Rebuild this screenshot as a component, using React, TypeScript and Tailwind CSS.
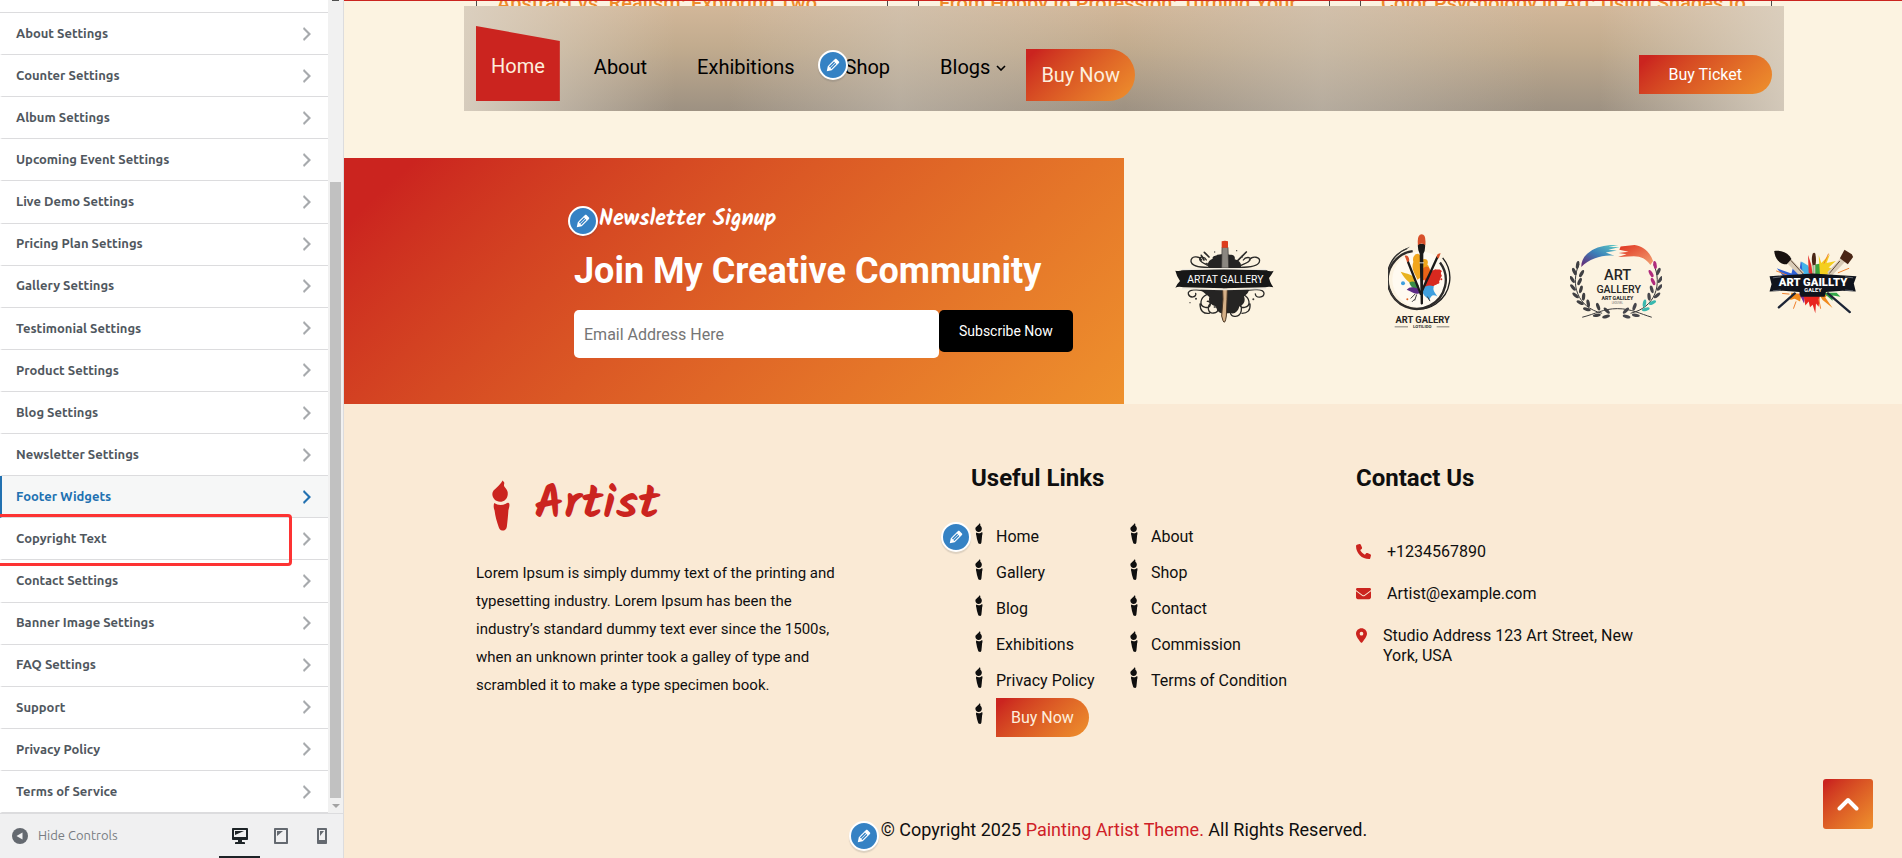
'use client'

import type { ReactNode } from 'react'
import { FaEnvelope, FaLocationDot, FaPhone } from 'react-icons/fa6'

const sections = [
  'About Settings',
  'Counter Settings',
  'Album Settings',
  'Upcoming Event Settings',
  'Live Demo Settings',
  'Pricing Plan Settings',
  'Gallery Settings',
  'Testimonial Settings',
  'Product Settings',
  'Blog Settings',
  'Newsletter Settings',
  'Footer Widgets',
  'Copyright Text',
  'Contact Settings',
  'Banner Image Settings',
  'FAQ Settings',
  'Support',
  'Privacy Policy',
  'Terms of Service'
]

const posts = [
  'Abstract vs. Realism: Exploring Two',
  'From Hobby to Profession: Turning Your',
  'Color Psychology in Art: Using Shades to'
]

const linksLeft = ['Home', 'Gallery', 'Blog', 'Exhibitions', 'Privacy Policy']
const linksRight = ['About', 'Shop', 'Contact', 'Commission', 'Terms of Condition']

const devices = [
  {
    name: 'Desktop',
    active: true,
    path: 'M3 2h14c.55 0 1 .45 1 1v10c0 .55-.45 1-1 1h-5v2h2c.55 0 1 .45 1 1v1H5v-1c0-.55.45-1 1-1h2v-2H3c-.55 0-1-.45-1-1V3c0-.55.45-1 1-1zm13 9V4H4v7h12zM5 5h9L5 9V5z'
  },
  {
    name: 'Tablet',
    active: false,
    path: 'M4 2h12c.55 0 1 .45 1 1v14c0 .55-.45 1-1 1H4c-.55 0-1-.45-1-1V3c0-.55.45-1 1-1zm11 14V4H5v12h10zM6 5h6l-6 5V5z'
  },
  {
    name: 'Mobile',
    active: false,
    path: 'M6 2h8c.55 0 1 .45 1 1v14c0 .55-.45 1-1 1H6c-.55 0-1-.45-1-1V3c0-.55.45-1 1-1zm7 12V4H7v10h6zM8 5h4l-4 5V5z'
  }
]

// ---------- Iconos ----------

function Brush({ className }: { className: string }) {
  return (
    <svg viewBox="95 57 56 157" className={className} fill="currentColor" aria-hidden="true">
      <path d="M128 58c2 4 7 5 5 10-2 6 0 9 4 13 5 6 8 12 7 20-1 13-11 23-24 23s-24-11-24-24c0-10 6-13 13-20 8-7 14-13 19-22z" />
      <path d="M102 128c10 7 24 8 36 2 4-3 9-5 11 0 1 8-1 14-3 20-1 18-3 36-5 52-2 9-9 12-14 11-6 0-9-4-11-10-6-17-11-34-13-52-3-8-4-15-1-23z" />
    </svg>
  )
}

function EditButton({ label, className }: { label: string; className: string }) {
  return (
    <button
      aria-label={label}
      className={`absolute z-10 flex size-[30px] items-center justify-center rounded-full border-2 border-white bg-[#3582c4] text-white shadow-[0_2px_1px_rgba(60,67,74,0.15)] ${className}`}
    >
      <svg viewBox="0 0 20 20" className="size-[18px]" fill="currentColor">
        <path d="M13.89 3.39l2.71 2.72c.46.46.42 1.24.03 1.64l-8.01 8.02-5.56 1.16 1.16-5.58s7.6-7.63 7.99-8.03c.39-.39 1.22-.39 1.68.07zm-2.73 2.79l-5.59 5.61 1.11 1.11 5.54-5.65zm-2.97 8.23l5.58-5.6-1.07-1.08-5.59 5.6z" />
      </svg>
    </button>
  )
}

// ---------- Logos de patrocinadores ----------

function LogoArtat() {
  return (
    <svg viewBox="105 55 297 255" className="h-[85px] w-[99px]" role="img" aria-label="Artat Gallery">
      <g fill="none" stroke="#2b2a28" strokeWidth="4" strokeLinecap="round">
        <path d="M205 140c-18 0-50-2-52-18s24-18 32-4M215 140c-14-8-34-14-36-24s16-8 20 2M300 140c18 0 52 0 58-16s-22-20-30-6M292 140c14-10 34-12 38-22s-14-10-20 0" />
        <path d="M195 212c-20-8-54-6-50 8s26 10 22-2M312 212c24-8 60-8 60 6s-24 16-26 2M200 222c-20 10-24 34-4 38s18-20 6-18M310 222c20 10 24 34 4 38s-18-20-6-18M215 245c-16 12-12 34 6 32s16-22 2-18M295 245c16 14 10 40-8 42s-22-22-6-24M180 250c0 20 10 30 28 28M330 250c2 20-8 28-24 28" />
        <path d="M193 95l14 14M319 94l-32 32M184 104l8 14" strokeWidth="5" />
      </g>
      <path fill="#252423" d="M206 142c-6-14 0-24 12-28-2-10 10-8 14-12 20-4 30-2 38 0 14 0 16 8 14 14 16 4 22 14 18 26z" />
      <path fill="#252423" d="M180 205h146c2 12-8 16-14 22 6 16-2 26-14 30-4 18-16 24-26 20l-24 2c-12-2-18-10-20-22-16-4-24-14-20-28-10-8-18-14-28-24z" />
      <g fill="#3c3a38">
        <circle cx="200" cy="130" r="4" /><circle cx="306" cy="108" r="3" /><circle cx="290" cy="90" r="2" />
        <circle cx="224" cy="94" r="2" /><circle cx="168" cy="234" r="3" /><circle cx="340" cy="236" r="3" />
        <circle cx="150" cy="246" r="2" /><circle cx="334" cy="112" r="2" />
      </g>
      <path fill="#8b8780" stroke="#3b3835" strokeWidth="2" d="M246 80h18l2 62h-21z" />
      <path fill="#dd3b1c" d="M245 62q10-4 19 0v19h-19z" />
      <path fill="#d5b087" stroke="#4b3725" strokeWidth="3" d="M248 206h14l-1 30 -2 50q-4 28-10 14l-4-14 4-50z" />
      <path fill="#171717" d="M106 150q12 3 22-2l124-3 126 3q12 6 23 2-6 12-14 22 4 16 13 28-14-4-24 0l-124 3-122-3q-14-4-24 1 4-10 14-20-10-14-14-31z" />
      <path d="M126 147l126-3 126 3M126 204l126 3 126-3" stroke="#eee9df" strokeWidth="4" fill="none" />
      <text x="256" y="186" textAnchor="middle" fontFamily="Roboto, sans-serif" fontSize="31" fill="#fff">ARTAT GALLERY</text>
    </svg>
  )
}

function LogoGalery() {
  return (
    <svg viewBox="748 42 195 290" className="h-[97px] w-[65px]" role="img" aria-label="Art Galery">
      <circle cx="845" cy="181" r="84" fill="#fffaf0" />
      <path d="M806 88a94 94 0 1 0 106 28" fill="none" stroke="#1c1c1c" strokeWidth="4" />
      <path d="M822 96a87 87 0 1 0 82 34" fill="none" stroke="#2d2b2a" strokeWidth="7" />
      <path d="M812 84a98 98 0 0 0-30 168" fill="none" stroke="#4c4a47" strokeWidth="2" />
      <path fill="#f2a61c" d="M824 128c-4-14 4-24 14-24 10 4 6 14 12 18 10-6 22 0 16 14 10 10 6 20 0 26l-30 20c-6-20-20-30-12-54z" />
      <path fill="#e9b320" d="M786 158c20 8 36 6 44 24l-6 18c-10-10-22-14-38-42z" />
      <path fill="#d8291f" d="M858 176c10-20 20-20 32-26 8 2 14-2 20 6-6 4-2 10 0 14-8 10-8 28-22 28-8 8-22 6-30 4z" />
      <path fill="#ea6417" d="M850 152c14-20 26-6 24 8l-16 22-12 4z" />
      <path fill="#3a8d45" d="M812 190c10-6 20-2 28 8l-4 12c-10 0-20-6-24-20z" />
      <path fill="#5b2a86" d="M804 212c10-12 20-8 34-4l4 14c-14 6-22-4-38-10z" />
      <path fill="#3fa0df" d="M850 212c12-16 24-14 36-10-6 10 4 20 10 30-14-8-20-2-24 12-6-10-18-10-22-32z" />
      <circle cx="793" cy="192" r="6" fill="#3fa0df" /><circle cx="898" cy="190" r="4" fill="#d8291f" />
      <circle cx="806" cy="240" r="3" fill="#e06020" /><circle cx="908" cy="180" r="3" fill="#d8291f" />
      <path d="M808 128l38 96M896 114l-50 110" stroke="#1b1a19" strokeWidth="7" strokeLinecap="round" />
      <path fill="#1b1a19" d="M838 74h21q2 18-5 30l-1 150q-4 5-7 0l-3-150q-7-14-5-30z" />
      <path fill="#d8502a" d="M838 78q-4-32 11-33 14 0 11 33-11-10-22 0zM798 110q12-4 14 14l-6 6zM906 102q-12 0-12 12l6 4z" />
      <path d="M842 131h14" stroke="#ddd" strokeWidth="3" />
      <path d="M816 238l14-14M820 248l8-8M866 232l8 14M834 226l-6 18" stroke="#3a3a3a" strokeWidth="3" />
      <text x="852" y="312" textAnchor="middle" fontFamily="Roboto, sans-serif" fontWeight="700" fontSize="28" fill="#262423">ART GALERY</text>
      <path d="M768 323h40M894 323h38" stroke="#444" strokeWidth="2" />
      <text x="851" y="328" textAnchor="middle" fontFamily="Roboto, sans-serif" fontWeight="700" fontSize="13" fill="#333">LOTILIDO</text>
    </svg>
  )
}

// hojas de la corona: x, y, giro
const leaves = [
  [176, 132, 10], [166, 152, -25], [188, 158, 30], [160, 176, -30], [182, 182, 25], [162, 200, -40],
  [186, 206, 15], [170, 224, -50], [194, 228, 5], [184, 246, -65], [208, 248, -10], [204, 266, -75],
  [238, 258, -20], [234, 284, 80], [264, 270, -45], [262, 288, 75]
]

function LogoWreath() {
  return (
    <svg viewBox="153 66 278 232" className="h-[77px] w-[92px]" role="img" aria-label="Art Gallery">
      <defs>
        <linearGradient id="azul" x1="0" y1="1" x2="1" y2="0">
          <stop offset="0" stopColor="#6a2370" />
          <stop offset="0.5" stopColor="#3b7fb8" />
          <stop offset="1" stopColor="#5fd0c6" />
        </linearGradient>
        <linearGradient id="naranja" x1="0" y1="0" x2="1" y2="1">
          <stop offset="0" stopColor="#e0321f" />
          <stop offset="1" stopColor="#f2a172" />
        </linearGradient>
      </defs>
      <path fill="url(#azul)" d="M187 138c0-18 8-34 26-46 22-16 50-22 86-20l-30 6 34 0-34 8 26 2-34 6 26 10c-36-4-74 8-100 34z" />
      <path fill="url(#naranja)" d="M306 76l42-4c26 4 46 20 56 48l-8 12c-14-18-28-26-50-26l-48 2 26-8-24-4 30-4-28-6z" />
      <path d="M180 130c-26 60-6 130 70 148M406 130c26 60 6 130-70 148M190 290c40-10 64-26 106-26s70 16 104 26" fill="none" stroke="#3a3a3c" strokeWidth="3" />
      {leaves.map(([x, y, a]) => (
        <ellipse key={`l${x}-${y}`} cx={x} cy={y} rx="5" ry="12" fill="#3f3f42" transform={`rotate(${a} ${x} ${y})`} />
      ))}
      {leaves.map(([x, y, a]) => (
        <ellipse
          key={`r${x}-${y}`}
          cx={586 - x}
          cy={y}
          rx="5"
          ry="12"
          fill={y < 190 && x > 170 ? '#b02a7c' : y > 240 && x < 220 ? '#39b8ae' : '#46464c'}
          transform={`rotate(${-a} ${586 - x} ${y})`}
        />
      ))}
      <text x="297" y="176" textAnchor="middle" fontFamily="Roboto, sans-serif" fontSize="44" fontWeight="500" fill="#262626">ART</text>
      <text x="300" y="218" textAnchor="middle" fontFamily="Roboto, sans-serif" fontSize="32" fontWeight="500" fill="#262626">GALLERY</text>
      <text x="296" y="237" textAnchor="middle" fontFamily="Roboto, sans-serif" fontSize="16" fontWeight="700" fill="#262626">ART GALILEY</text>
      <text x="296" y="250" textAnchor="middle" fontFamily="Roboto, sans-serif" fontSize="8" fill="#666">LEOUVEL</text>
    </svg>
  )
}

function LogoGaillty() {
  return (
    <svg viewBox="750 82 267 196" className="h-[65px] w-[89px]" role="img" aria-label="Art Gaillty">
      <path fill="#2f62d8" d="M776 140l44 16 4-16 20 8 4-28 20 20 12 30h-80z" />
      <path fill="#45b4e8" d="M850 120l20 12 14 30-30-4z" />
      <path fill="#e6322c" d="M870 100l10 30 4 30-12-6z" />
      <path fill="#3aa33c" d="M884 130l24-4 18 12-4 24h-38z" />
      <path fill="#f4cf1f" d="M902 100l8 24 26-26-10 26 28-6-22 20 20 4-26 18h-20z" />
      <path fill="#f08a1d" d="M820 214l30 4-4 22-16-8-14 4zM900 214h34l-12 14 22 32-30-24z" />
      <path fill="#7a2d9c" d="M842 216h20l-4 30-8-16z" />
      <path fill="#e8251f" d="M856 216h50l-4 40-8-10-2 30-8-26-8 8-4-18-10 12z" />
      <path fill="#32a848" d="M916 214h40l12 12-24-4 0 16z" />
      <path d="M774 148l32 12M932 96l-14 30M994 140l-34 14M792 216l22 2M908 262l-6-30M826 262l8-22" stroke="#f07f2a" strokeWidth="3" />
      <path d="M786 148l20 8" stroke="#2f62d8" strokeWidth="4" />
      <path d="M808 114l44 44M978 112l-44 46" stroke="#d9cbb6" strokeWidth="17" />
      <path d="M818 116l38 42M966 118l-32 38" stroke="#5c4634" strokeWidth="3" />
      <path fill="#17110f" d="M768 88c20-4 42 4 52 24l-14 16c-24 0-36-18-38-40z" />
      <path fill="#4a2615" d="M980 84l22 14 4 8-16 22-24-18z" />
      <path fill="#4a2615" d="M884 96q5-6 8 0 4 20 0 36h-8q-5-20 0-36z" />
      <path d="M886 130h6v30h-6z" fill="#cfc6b8" />
      <path d="M830 216l-48 42M930 216l66 56" stroke="#1d2536" strokeWidth="7" strokeLinecap="round" />
      <path fill="#0f131c" d="M754 164l34-2 96-6 96 6 36 2-8 22 6 24-40-2-50 4-4 14h-72l-4-14-50-4-40 2 6-22z" />
      <path d="M788 166l-24 3M788 206l-24 2M982 166l24 3M982 206l24 2" stroke="#8b8f98" strokeWidth="2" />
      <text x="885" y="195" textAnchor="middle" fontFamily="Roboto, sans-serif" fontWeight="900" fontSize="34" fill="#fff">ART GAILLTY</text>
      <text x="885" y="213" textAnchor="middle" fontFamily="Roboto, sans-serif" fontWeight="700" fontSize="17" fill="#fff">GALEY</text>
    </svg>
  )
}

// ---------- Panel lateral ----------

function Sidebar() {
  return (
    <aside className="flex h-screen w-[344px] shrink-0 flex-col border-r border-[#dcdcde] bg-white font-['Ubuntu','Noto_Sans',sans-serif]">
      <div className="flex min-h-0 flex-1">
        <ul className="flex min-w-0 flex-1 flex-col">
          <li className="h-[13px] shrink-0 border-b border-[#dcdcde]" />
          {sections.map((title) => {
            const active = title === 'Footer Widgets'
            return (
              <li key={title} className="relative min-h-0 flex-1">
                <button
                  className={`flex h-full w-full items-center justify-between border-b border-l-2 border-b-[#dcdcde] pr-[11px] pl-3.5 text-left text-[13px] font-semibold ${
                    active ? 'border-l-[#2271b1] bg-[#f6f7f7] text-[#2271b1]' : 'border-l-transparent text-[#50575e]'
                  }`}
                >
                  {title}
                  <svg
                    viewBox="0 0 20 20"
                    className={`size-5 ${active ? 'text-[#2271b1]' : 'text-[#a7aaad]'}`}
                    fill="currentColor"
                    aria-hidden="true"
                  >
                    <path d="M6 15l5-5-5-5 1-2 7 7-7 7z" />
                  </svg>
                </button>
                {title === 'Copyright Text' && (
                  <div className="absolute -top-1 right-9 -bottom-[6px] -left-1 z-10 rounded-sm border-3 border-[#fd3333]" />
                )}
              </li>
            )
          })}
        </ul>
        <div className="flex w-[15px] flex-col items-center bg-[#f1f1f1]" aria-hidden="true">
          <div className="h-px w-[7px] bg-[#505050]" />
          <div className="mt-[181px] w-[11px] flex-1 bg-[#c1c1c1]" />
          <svg viewBox="0 0 8 4" className="mt-[6px] mb-[5px] h-1 w-2 shrink-0" fill="#a3a3a3">
            <path d="M0 0h8L4 4z" />
          </svg>
        </div>
      </div>
      <div className="flex h-[45px] shrink-0 items-stretch justify-between border-t border-[#dcdcde] bg-[#f0f0f1]">
        <button className="flex items-center gap-2.5 pl-3 text-[13px] text-[#787c82]">
          <svg viewBox="0 0 16 16" className="size-4" aria-hidden="true">
            <circle cx="8" cy="8" r="8" fill="#646970" />
            <path d="M10.500 4.500v7L4.500 8z" fill="#f0f0f1" />
          </svg>
          Hide Controls
        </button>
        <div className="mr-px flex">
          {devices.map((d) => (
            <button
              key={d.name}
              aria-label={d.name}
              className={`flex w-[41px] items-center justify-center border-b-2 pt-0.5 ${
                d.active ? 'border-[#1d2327] text-[#1d2327]' : 'border-transparent text-[#646970]'
              }`}
            >
              <svg viewBox="0 0 20 20" className="size-5" fill="currentColor">
                <path d={d.path} />
              </svg>
            </button>
          ))}
        </div>
      </div>
    </aside>
  )
}

// ---------- Vista previa ----------

function Container({ children, className = '' }: { children: ReactNode; className?: string }) {
  return <div className={`mx-auto w-full max-w-[1320px] ${className}`}>{children}</div>
}

function Header() {
  return (
    <header>
      <div className="h-1.5 overflow-hidden border-t border-[#cb241f]">
        <Container className="grid grid-cols-3 gap-[30px] px-3">
          {posts.map((p) => (
            <div key={p} className="h-1.5 border-x border-[#4b4b4b] px-5">
              <p className="-mt-2 text-xl leading-5 font-medium whitespace-nowrap text-[#ee8b2c]">{p}</p>
            </div>
          ))}
        </Container>
      </div>
      <Container className="flex h-[105px] items-end justify-between bg-[linear-gradient(90deg,rgba(220,210,195,0.9)_0%,rgba(208,198,184,0)_16%,rgba(208,198,184,0)_20%,rgba(210,203,192,0.45)_33%,rgba(208,198,184,0)_50%,rgba(210,203,192,0.45)_65%,rgba(208,198,184,0)_82%,rgba(208,198,184,0)_86%,rgba(220,210,195,0.85)_100%),linear-gradient(180deg,#d2b799_0%,#c1ab8e_40%,#9d9182_100%)] px-3">
        <nav className="mb-2.5 flex h-[75px] items-end text-xl text-black">
          <a
            href="#home"
            className="flex h-[75px] items-center bg-[#cb241f] px-[15px] pt-1 text-[#fdeedd] [clip-path:polygon(0_0,100%_20%,100%_100%,0_100%)]"
          >
            Home
          </a>
          <a href="#about" className="ml-[34px] leading-[67px]">About</a>
          <a href="#exhibitions" className="ml-[50px] leading-[67px]">Exhibitions</a>
          <div className="relative ml-[50px] leading-[67px]">
            <EditButton label="Edit menu" className="top-4 -left-[27px]" />
            <a href="#shop">Shop</a>
          </div>
          <a href="#blogs" className="ml-[50px] flex items-center gap-1.5 leading-[67px]">
            Blogs
            <svg viewBox="0 0 10 6" className="h-1.5 w-2.5" fill="none" stroke="currentColor" strokeWidth="1.6" aria-hidden="true">
              <path d="M1 1l4 4 4-4" />
            </svg>
          </a>
          <a
            href="#buy"
            className="ml-5 rounded-r-full bg-linear-137 from-[#cb241f] from-7% to-[#ee912d] px-[15px] leading-[52px] text-[#fdeedd]"
          >
            Buy Now
          </a>
        </nav>
        <a
          href="#ticket"
          className="mb-[17px] rounded-r-full bg-linear-137 from-[#cb241f] from-7% to-[#ee912d] px-[30px] leading-[39px] text-white"
        >
          Buy Ticket
        </a>
      </Container>
    </header>
  )
}

function Newsletter() {
  return (
    <section className="mt-[47px] grid h-[246px] grid-cols-2">
      <div className="bg-linear-137 from-[#cb241f] from-7% to-[#ee912d] pt-10 pl-[230px] text-white">
        <div className="relative">
          <EditButton label="Edit newsletter" className="top-2 -left-1.5" />
          <p className="pt-1 pl-[25px] font-['Kalam','Lato',cursive] text-[22px] leading-9 font-bold">Newsletter Signup</p>
        </div>
        <h2 className="mt-3 text-4xl leading-[42px] font-bold whitespace-nowrap">Join My Creative Community</h2>
        <form className="mt-[18px] flex items-start" onSubmit={(e) => e.preventDefault()}>
          <input
            type="email"
            aria-label="Email Address Here"
            placeholder="Email Address Here"
            className="h-12 w-[365px] rounded-[5px] bg-white px-2.5 text-base text-black placeholder:text-[#757575]"
          />
          <button className="h-[42px] rounded-[5px] bg-black px-5 text-sm whitespace-nowrap text-white">Subscribe Now</button>
        </form>
      </div>
      <div className="overflow-hidden">
        <div className="-mr-1.5 ml-0.5 grid h-full grid-cols-4 place-items-center">
          <LogoArtat />
          <LogoGalery />
          <LogoWreath />
          <LogoGaillty />
        </div>
      </div>
    </section>
  )
}

function LinkList({ items, children }: { items: string[]; children?: ReactNode }) {
  return (
    <ul>
      {items.map((item) => (
        <li key={item} className="flex h-9 gap-[13px] pl-1">
          <Brush className="mt-1 h-[21px] w-2 shrink-0" />
          <a href="#link" className="leading-9 whitespace-nowrap">{item}</a>
        </li>
      ))}
      {children}
    </ul>
  )
}

function Footer() {
  return (
    <footer className="flex-1 bg-[#faead5] pt-[60px] text-[#0f0f0f]">
      <Container className="grid grid-cols-[495fr_385fr_416fr] px-3">
        <div className="pt-4">
          <div className="flex h-[51px] items-center gap-6 pl-4 text-[#cb241f]">
            <Brush className="h-[51px] w-[18px]" />
            <span className="font-['Kalam','Lato',cursive] text-5xl leading-[51px] font-bold">Artist</span>
          </div>
          <p className="mt-7 max-w-[370px] text-[15px] leading-7">
            Lorem Ipsum is simply dummy text of the printing and typesetting industry. Lorem Ipsum has been the
            industry’s standard dummy text ever since the 1500s, when an unknown printer took a galley of type and
            scrambled it to make a type specimen book.
          </p>
        </div>
        <div>
          <h3 className="text-2xl leading-7 font-bold">Useful Links</h3>
          <div className="relative mt-[27px] flex">
            <EditButton label="Edit links" className="top-[3px] -left-[30px]" />
            <div className="w-[155px]">
              <LinkList items={linksLeft}>
                <li className="flex h-9 gap-[13px] pl-1">
                  <Brush className="mt-1 h-[21px] w-2 shrink-0" />
                  <div className="flex items-center">
                    <a
                      href="#buy"
                      className="rounded-r-full bg-linear-137 from-[#cb241f] from-7% to-[#ee912d] px-[15px] leading-[39px] whitespace-nowrap text-[#fdeedd]"
                    >
                      Buy Now
                    </a>
                  </div>
                </li>
              </LinkList>
            </div>
            <LinkList items={linksRight} />
          </div>
        </div>
        <div>
          <h3 className="text-2xl leading-7 font-bold">Contact Us</h3>
          <ul className="mt-[50px] flex flex-col gap-[22px] leading-5">
            <li className="flex gap-4">
              <FaPhone className="mt-0.5 size-[15px] shrink-0 text-[#cb241f]" />
              <a href="tel:+1234567890">+1234567890</a>
            </li>
            <li className="flex gap-4">
              <FaEnvelope className="mt-0.5 size-[15px] shrink-0 text-[#cb241f]" />
              <a href="mailto:Artist@example.com">Artist@example.com</a>
            </li>
            <li className="flex gap-4">
              <FaLocationDot className="mt-0.5 h-[15px] w-[11px] shrink-0 text-[#cb241f]" />
              <p className="max-w-[270px]">Studio Address 123 Art Street, New York, USA</p>
            </li>
          </ul>
        </div>
      </Container>
      <div className="mt-[81px] flex justify-center pb-[14px] text-lg leading-[27px]">
        <p className="relative">
          <EditButton label="Edit copyright" className="top-[5px] -left-8" />
          © Copyright 2025 <a href="#theme" className="text-[#cf2027]">Painting Artist Theme.</a> All Rights Reserved.
        </p>
      </div>
    </footer>
  )
}

export default function App() {
  return (
    <div className="flex h-screen overflow-hidden">
      <Sidebar />
      <main className="relative -mr-0.5 flex min-w-0 flex-1 flex-col overflow-hidden bg-[#fcf3e1] font-['Roboto',sans-serif] text-base">
        <Header />
        <Newsletter />
        <Footer />
        <button
          aria-label="Scroll to top"
          className="absolute right-[31px] bottom-[29px] flex size-[50px] items-center justify-center rounded-[3px] bg-linear-137 from-[#cb241f] from-7% to-[#ee912d] text-white"
        >
          <svg viewBox="0 0 22 14" className="h-3.5 w-[22px]" fill="none" stroke="currentColor" strokeWidth="4" strokeLinecap="round" strokeLinejoin="round">
            <path d="M2.500 11.500L11 3l8.500 8.500" />
          </svg>
        </button>
      </main>
    </div>
  )
}
